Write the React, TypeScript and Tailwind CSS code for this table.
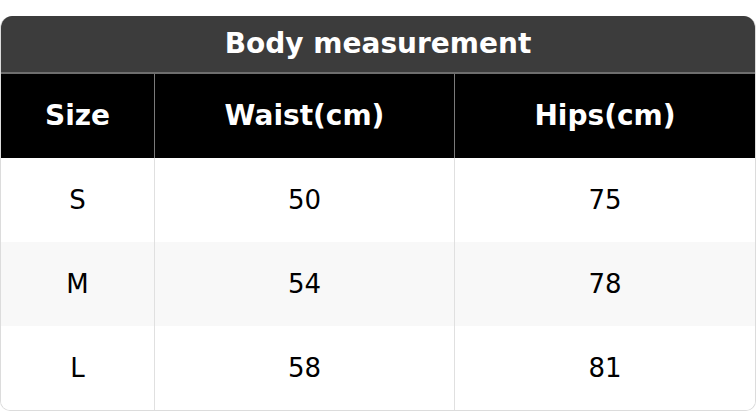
import React from "react";

const rows = [
  ["S", "50", "75"],
  ["M", "54", "78"],
  ["L", "58", "81"],
];

export default function App() {
  return (
    <div className="w-[756px] h-[412px] bg-white pt-[16px]" style={{ fontFamily: '"DejaVu Sans", sans-serif' }}>
      <div className="w-[756px] rounded-t-[12px] rounded-b-[10px] overflow-hidden border-x border-b border-[#dcdcdc]">
        <div className="h-[56px] bg-[#3c3c3c] text-white font-bold text-[28px] flex items-center justify-center">
          Body measurement
        </div>
        <div className="grid grid-cols-[154px_300px_1fr] border-t-2 border-[#6e6e6e] bg-black text-white font-bold text-[28px]">
          <div className="h-[84px] flex items-center justify-center border-r border-[#7a7a7a]">Size</div>
          <div className="h-[84px] flex items-center justify-center border-r border-[#7a7a7a]">Waist(cm)</div>
          <div className="h-[84px] flex items-center justify-center">Hips(cm)</div>
        </div>
        {rows.map((r, i) => (
          <div
            key={i}
            className={`grid grid-cols-[154px_300px_1fr] text-[26px] text-black ${i === 1 ? "bg-[#f8f8f8]" : "bg-white"}`}
          >
            <div className="h-[84px] flex items-center justify-center border-r border-[#e0e0e0]">{r[0]}</div>
            <div className="h-[84px] flex items-center justify-center border-r border-[#e0e0e0]">{r[1]}</div>
            <div className="h-[84px] flex items-center justify-center">{r[2]}</div>
          </div>
        ))}
      </div>
    </div>
  );
}
